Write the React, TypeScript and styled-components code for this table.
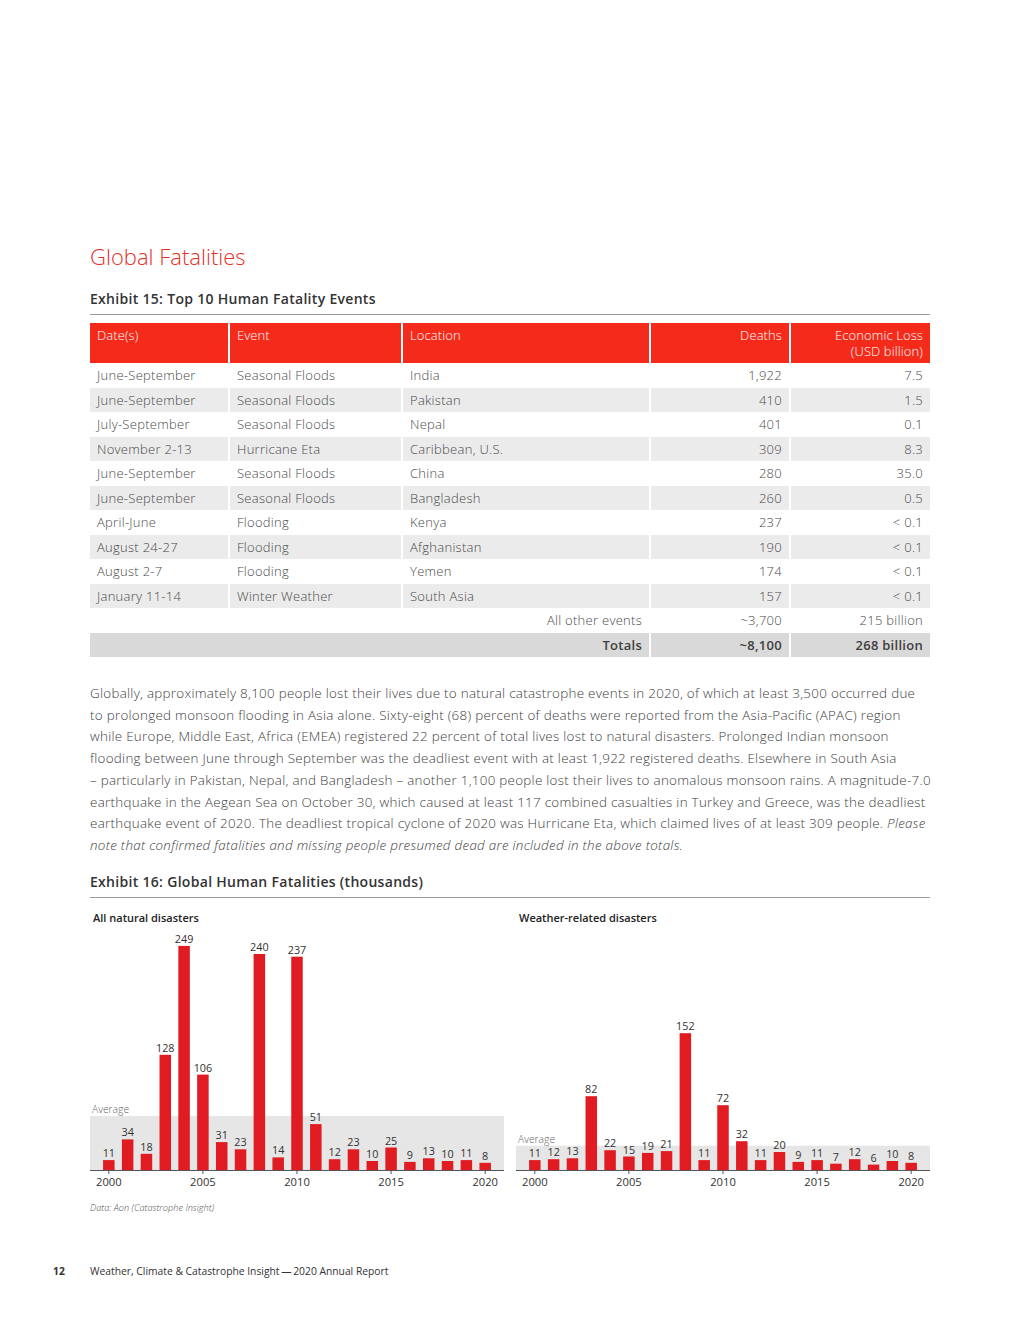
import React from "react";
import styled, { createGlobalStyle } from "styled-components";

const GlobalStyle = createGlobalStyle`
  html, body { margin: 0; padding: 0; background: #ffffff; }
  body { font-family: "Open Sans", "Noto Sans", sans-serif; color: #555; }
  * { box-sizing: border-box; }
`;

const Page = styled.div`
  width: 1020px;
  height: 1320px;
  padding: 242px 90px 0 90px;
  display: flex;
  flex-direction: column;
  position: relative;
`;

const Title = styled.h1`
  margin: 0;
  font-size: 22px;
  line-height: 28px;
  font-weight: 300;
  color: #e4301f;
`;

const ExhibitHeading = styled.h2<{ $mt: number }>`
  margin: ${(p) => p.$mt}px 0 0 0;
  font-size: 14px;
  line-height: 20px;
  font-weight: 600;
  letter-spacing: 0.3px;
  color: #333;
  padding-bottom: 5px;
  border-bottom: 1px solid #9a9a9a;
`;

const Table = styled.table`
  margin-top: 8px;
  width: 840px;
  table-layout: fixed;
  border-collapse: collapse;
  font-size: 13px;
  color: #505050;
`;

const HeadCell = styled.th<{ $right?: boolean; $w: number; $first?: boolean }>`
  width: ${(p) => p.$w}px;
  height: 40px;
  background: #f42b1b;
  color: #ffffff;
  font-weight: 300;
  letter-spacing: 0.1px;
  text-align: ${(p) => (p.$right ? "right" : "left")};
  vertical-align: top;
  padding: 4px 7px 0 7px;
  line-height: 16px;
  border-left: ${(p) => (p.$first ? "0" : "2px solid #fff")};
`;

const Row = styled.tr<{ $shade: "none" | "light" | "dark" }>`
  height: 24.5px;
  background: ${(p) =>
    p.$shade === "light" ? "#ebebeb" : p.$shade === "dark" ? "#d9d9d9" : "#ffffff"};
`;

const Cell = styled.td<{ $right?: boolean; $first?: boolean; $bold?: boolean }>`
  padding: 0 7px;
  line-height: 24.5px;
  white-space: nowrap;
  letter-spacing: 0.28px;
  text-align: ${(p) => (p.$right ? "right" : "left")};
  border-left: ${(p) => (p.$first ? "0" : "2px solid #fff")};
  font-weight: ${(p) => (p.$bold ? 600 : 300)};
  color: ${(p) => (p.$bold ? "#404040" : "#4a4a4a")};
`;

const Paragraph = styled.p`
  margin: 26px 0 0 0;
  font-size: 13.4px;
  line-height: 21.7px;
  font-weight: 300;
  letter-spacing: 0.28px;
  color: #404040;
  white-space: nowrap;
  em { font-style: italic; }
`;

const ChartRow = styled.div`
  display: flex;
  gap: 12px;
  margin-top: 13px;
`;

const ChartPanel = styled.div`
  width: 414px;
  display: flex;
  flex-direction: column;
`;

const ChartTitle = styled.div`
  font-size: 11px;
  line-height: 14px;
  font-weight: 600;
  color: #222;
  padding-left: 3px;
`;

const Source = styled.div`
  margin-top: 5px;
  font-size: 9.2px;
  line-height: 12px;
  font-style: italic;
  font-weight: 300;
  color: #555;
`;

const Footer = styled.div`
  position: absolute;
  left: 53px;
  top: 1264px;
  display: flex;
  align-items: center;
  font-size: 10.3px;
  line-height: 14px;
  color: #333;
`;

const PageNum = styled.span`
  width: 37px;
  font-weight: 700;
`;

const rows = [
  ["June-September", "Seasonal Floods", "India", "1,922", "7.5"],
  ["June-September", "Seasonal Floods", "Pakistan", "410", "1.5"],
  ["July-September", "Seasonal Floods", "Nepal", "401", "0.1"],
  ["November 2-13", "Hurricane Eta", "Caribbean, U.S.", "309", "8.3"],
  ["June-September", "Seasonal Floods", "China", "280", "35.0"],
  ["June-September", "Seasonal Floods", "Bangladesh", "260", "0.5"],
  ["April-June", "Flooding", "Kenya", "237", "< 0.1"],
  ["August 24-27", "Flooding", "Afghanistan", "190", "< 0.1"],
  ["August 2-7", "Flooding", "Yemen", "174", "< 0.1"],
  ["January 11-14", "Winter Weather", "South Asia", "157", "< 0.1"],
];

const allData = [11, 34, 18, 128, 249, 106, 31, 23, 240, 14, 237, 51, 12, 23, 10, 25, 9, 13, 10, 11, 8];
const weatherData = [11, 12, 13, 82, 22, 15, 19, 21, 152, 11, 72, 32, 11, 20, 9, 11, 7, 12, 6, 10, 8];

const W = 414;
const BASE = 245;
const SCALE = 0.9;
const SLOT = W / 22;

function BarChart({ data, average }: { data: number[]; average: number }) {
  const bandTop = BASE - average * SCALE;
  return (
    <svg width={W} height={272} viewBox={`0 0 ${W} 272`} style={{ display: "block" }}>
      <rect x={0} y={bandTop} width={W} height={BASE - bandTop} fill="#e6e6e6" />
      <text x={2} y={bandTop - 3} fontSize={10.3} fill="#666" fontFamily="Open Sans, sans-serif" fontWeight={300}>
        Average
      </text>
      {data.map((v, i) => {
        const cx = SLOT * (i + 1);
        const h = v * SCALE;
        return (
          <g key={i}>
            <rect x={cx - 5.75} y={BASE - h} width={11.5} height={h} fill="#e11b22" />
            <text
              x={cx}
              y={BASE - h - 3}
              fontSize={10.8}
              textAnchor="middle"
              fill="#333"
              fontFamily="Open Sans, sans-serif"
            >
              {v}
            </text>
          </g>
        );
      })}
      <line x1={0} y1={BASE + 0.5} x2={W} y2={BASE + 0.5} stroke="#555" strokeWidth={1} />
      {[0, 5, 10, 15, 20].map((i) => (
        <g key={i}>
          <line x1={SLOT * (i + 1)} y1={BASE} x2={SLOT * (i + 1)} y2={BASE + 4} stroke="#555" strokeWidth={1} />
          <text
            x={SLOT * (i + 1)}
            y={BASE + 16}
            fontSize={11.2}
            textAnchor="middle"
            fill="#333"
            fontFamily="Open Sans, sans-serif"
          >
            {2000 + i}
          </text>
        </g>
      ))}
    </svg>
  );
}

const widths = [139, 173, 248, 140, 140];

export default function App() {
  return (
    <>
      <GlobalStyle />
      <Page>
        <Title>Global Fatalities</Title>
        <ExhibitHeading $mt={19}>Exhibit 15: Top 10 Human Fatality Events</ExhibitHeading>
        <Table>
          <thead>
            <tr>
              <HeadCell $w={widths[0]} $first>Date(s)</HeadCell>
              <HeadCell $w={widths[1]}>Event</HeadCell>
              <HeadCell $w={widths[2]}>Location</HeadCell>
              <HeadCell $w={widths[3]} $right>Deaths</HeadCell>
              <HeadCell $w={widths[4]} $right>
                Economic Loss
                <br />
                (USD billion)
              </HeadCell>
            </tr>
          </thead>
          <tbody>
            {rows.map((r, i) => (
              <Row key={i} $shade={i % 2 === 1 ? "light" : "none"}>
                <Cell $first>{r[0]}</Cell>
                <Cell>{r[1]}</Cell>
                <Cell>{r[2]}</Cell>
                <Cell $right>{r[3]}</Cell>
                <Cell $right>{r[4]}</Cell>
              </Row>
            ))}
            <Row $shade="none">
              <Cell $first $right colSpan={3}>All other events</Cell>
              <Cell $right>~3,700</Cell>
              <Cell $right>215 billion</Cell>
            </Row>
            <Row $shade="dark">
              <Cell $first $right $bold colSpan={3}>Totals</Cell>
              <Cell $right $bold>~8,100</Cell>
              <Cell $right $bold>268 billion</Cell>
            </Row>
          </tbody>
        </Table>
        <Paragraph>
          Globally, approximately 8,100 people lost their lives due to natural catastrophe events in 2020, of which at least 3,500 occurred due
          <br />
          to prolonged monsoon flooding in Asia alone. Sixty-eight (68) percent of deaths were reported from the Asia-Pacific (APAC) region
          <br />
          while Europe, Middle East, Africa (EMEA) registered 22 percent of total lives lost to natural disasters. Prolonged Indian monsoon
          <br />
          flooding between June through September was the deadliest event with at least 1,922 registered deaths. Elsewhere in South Asia
          <br />
          – particularly in Pakistan, Nepal, and Bangladesh – another 1,100 people lost their lives to anomalous monsoon rains. A magnitude-7.0
          <br />
          earthquake in the Aegean Sea on October 30, which caused at least 117 combined casualties in Turkey and Greece, was the deadliest
          <br />
          earthquake event of 2020. The deadliest tropical cyclone of 2020 was Hurricane Eta, which claimed lives of at least 309 people. <em>Please</em>
          <br />
          <em>note that confirmed fatalities and missing people presumed dead are included in the above totals.</em>
        </Paragraph>
        <ExhibitHeading $mt={15}>Exhibit 16: Global Human Fatalities (thousands)</ExhibitHeading>
        <ChartRow>
          <ChartPanel>
            <ChartTitle>All natural disasters</ChartTitle>
            <BarChart data={allData} average={60} />
          </ChartPanel>
          <ChartPanel>
            <ChartTitle>Weather-related disasters</ChartTitle>
            <BarChart data={weatherData} average={27} />
          </ChartPanel>
        </ChartRow>
        <Source>Data: Aon (Catastrophe Insight)</Source>
        <Footer>
          <PageNum>12</PageNum>
          <span>Weather, Climate &amp; Catastrophe Insight{"\u2009—\u2009"}2020 Annual Report</span>
        </Footer>
      </Page>
    </>
  );
}
